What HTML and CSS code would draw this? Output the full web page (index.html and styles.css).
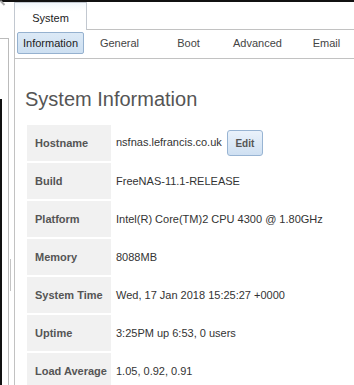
FILE: index.html
```html
<!DOCTYPE html>
<html lang="en">
<head>
  <meta charset="UTF-8">
  <meta name="viewport" content="width=device-width, initial-scale=1.0">
  <title>System Information</title>
  <link rel="stylesheet" href="styles.css">
</head>
<body>
  <div class="corner"></div>
  <div class="layout">
    <div class="sidebar">
      <div class="sidebar-box">
        <div class="splitter"></div>
      </div>
    </div>

    <div class="main">
      <div class="tabs">
        <div class="tab">System</div>
      </div>

      <div class="pane">
        <div class="subtabs">
          <div class="subtab active">Information</div>
          <div class="subtab">General</div>
          <div class="subtab">Boot</div>
          <div class="subtab">Advanced</div>
          <div class="subtab">Email</div>
        </div>

        <div class="content">
          <h2>System Information</h2>
          <table class="info">
            <tr>
              <th>Hostname</th>
              <td>nsfnas.lefrancis.co.uk <button class="button">Edit</button></td>
            </tr>
            <tr>
              <th>Build</th>
              <td>FreeNAS-11.1-RELEASE</td>
            </tr>
            <tr>
              <th>Platform</th>
              <td>Intel(R) Core(TM)2 CPU 4300 @ 1.80GHz</td>
            </tr>
            <tr>
              <th>Memory</th>
              <td>8088MB</td>
            </tr>
            <tr>
              <th>System Time</th>
              <td>Wed, 17 Jan 2018 15:25:27 +0000</td>
            </tr>
            <tr>
              <th>Uptime</th>
              <td>3:25PM up 6:53, 0 users</td>
            </tr>
            <tr>
              <th>Load Average</th>
              <td>1.05, 0.92, 0.91</td>
            </tr>
          </table>
        </div>
      </div>
    </div>
  </div>
</body>
</html>
```

FILE: styles.css
```css
body {
  margin: 0;
  padding: 0;
  font-family: "Liberation Sans", Arial, sans-serif;
  font-size: 11px;
  color: #333;
  background: #fff;
  height: 385px;
  overflow: hidden;
  position: relative;
}

.corner {
  position: absolute;
  top: 0;
  left: 1px;
  width: 6px;
  height: 2px;
  background: #aaa;
  transform: rotate(45deg);
  transform-origin: 0 0;
}

.layout {
  display: flex;
  border-top: 2px solid #111;
  height: 383px;
}

.sidebar {
  width: 14px;
  flex: none;
  padding-top: 36px;
  box-sizing: border-box;
}

.sidebar-box {
  height: 100%;
  width: 9px;
  box-sizing: border-box;
  border-top: 1px solid #bbb;
  border-right: 1px solid #bbb;
  position: relative;
}

.splitter {
  position: absolute;
  left: 0;
  top: 60px;
  bottom: 0;
  width: 2px;
  background: #111;
}

.splitter::after {
  content: "";
  position: absolute;
  left: 10px;
  top: 160px;
  width: 1px;
  height: 32px;
  background: #c4c4c4;
}

.main {
  flex: 1;
  display: flex;
  flex-direction: column;
}

.tabs {
  display: flex;
  align-items: flex-end;
  height: 29px;
  border-bottom: 1px solid #c2c2c2;
}

.tab {
  width: 73px;
  height: 28px;
  box-sizing: border-box;
  margin-bottom: -1px;
  border: 1px solid #c2c8d0;
  border-bottom: none;
  background: linear-gradient(#f1f6fb, #fff 8px);
  color: #222;
  text-align: center;
  line-height: 31px;
}

.pane {
  flex: 1;
  border-left: 1px solid #c2c2c2;
}

.subtabs {
  display: flex;
  gap: 2px;
  height: 29px;
  padding: 2px 0 0 2px;
  box-sizing: border-box;
  border-bottom: 1px solid #c2c2c2;
}

.subtab {
  width: 67px;
  height: 22px;
  box-sizing: border-box;
  flex: none;
  border: 1px solid transparent;
  border-radius: 2px;
  text-align: center;
  line-height: 20px;
  color: #444;
}

.subtab.active {
  background: linear-gradient(#dce9f6, #cddff1);
  border-color: #95b1cf;
  color: #222;
}

.content {
  padding: 0 0 0 10px;
}

h2 {
  margin: 29px 0 12px 0;
  font-size: 20px;
  line-height: 23px;
  font-weight: normal;
  color: #555;
}

.info {
  border-collapse: separate;
  border-spacing: 0 2px;
  margin-left: 2px;
}

.info th {
  width: 84px;
  box-sizing: border-box;
  height: 36px;
  padding: 0 0 0 8px;
  background: #f1f1f1;
  color: #555;
  font-weight: bold;
  text-align: left;
  white-space: nowrap;
}

.info td {
  height: 36px;
  padding: 0 0 0 5px;
  white-space: nowrap;
}

.button {
  width: 36px;
  height: 26px;
  margin-left: 2px;
  padding: 0;
  vertical-align: middle;
  font-family: "Liberation Sans", Arial, sans-serif;
  font-size: 10px;
  font-weight: bold;
  color: #555;
  background: linear-gradient(#eaf2fb, #cfe0f2);
  border: 1px solid #98b4d3;
  border-radius: 3px;
}
```
